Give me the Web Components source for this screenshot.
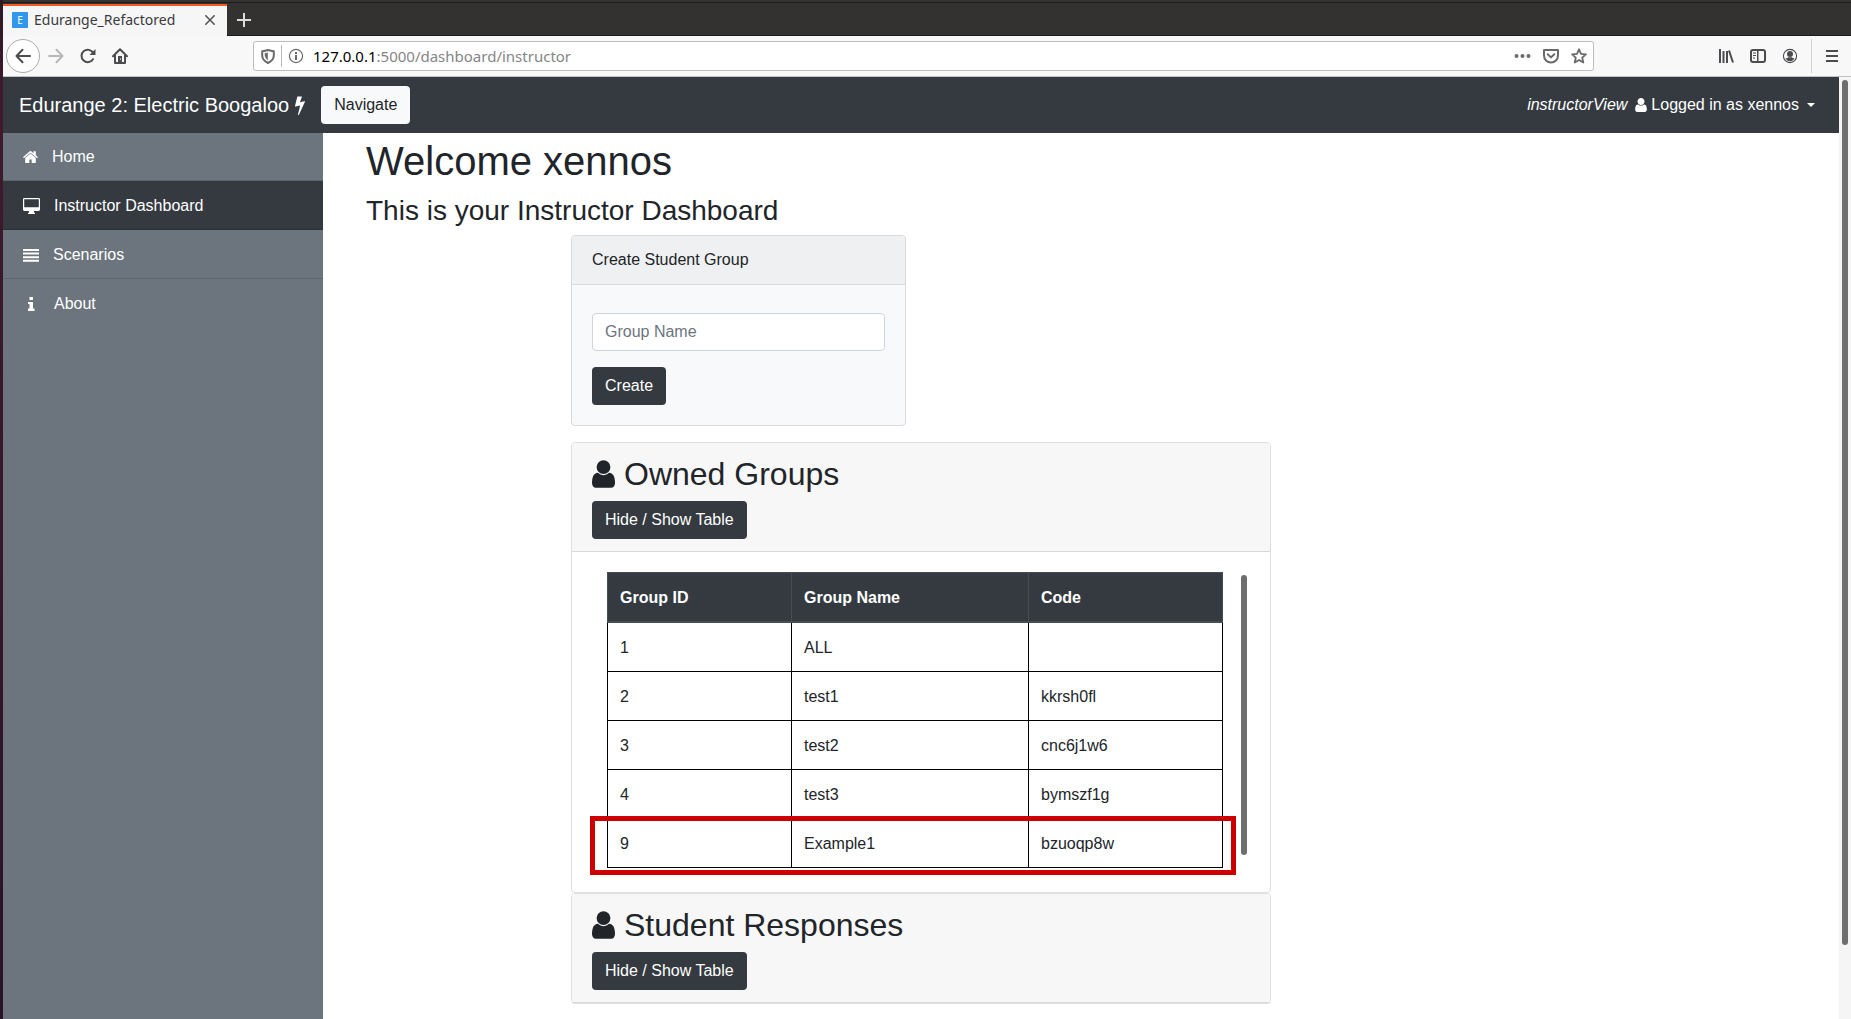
<!DOCTYPE html>
<html lang="en">
<head>
<meta charset="utf-8">
<title>Edurange_Refactored</title>
<style>
  body { margin: 0; background: #fff; color: #212529; font: 16px/24px "Liberation Sans", Arial, sans-serif; }
</style>
</head>
<body>
<desktop-frame>
  <browser-chrome slot="chrome" tab-title="Edurange_Refactored" host="127.0.0.1" path=":5000/dashboard/instructor"></browser-chrome>
  <top-nav slot="nav" brand="Edurange 2: Electric Boogaloo" view="instructorView" user="xennos"></top-nav>
  <side-nav slot="side">
    <side-link icon="home" size="15">Home</side-link>
    <side-link icon="desktop" size="17" active>Instructor Dashboard</side-link>
    <side-link icon="justify" size="16">Scenarios</side-link>
    <side-link icon="info" size="17">About</side-link>
  </side-nav>
  <instructor-dashboard></instructor-dashboard>
</desktop-frame>

<script>
const ICONS = {
  user: ['256 128 1280 1536', '<path d="M1536 1399q0 109-62.5 187t-150.5 78h-854q-88 0-150.5-78t-62.5-187q0-85 8.5-160.5t31.5-152 58.5-131 94-89 134.5-34.5q131 128 313 128t313-128q76 0 134.5 34.5t94 89 58.5 131 31.5 152 8.5 160.5zm-256-887q0 159-112.5 271.5t-271.5 112.5-271.5-112.5-112.5-271.5 112.5-271.5 271.5-112.5 271.5 112.5 112.5 271.5z"/>'],
  home: ['90 240 1612 1300', '<path d="M1472 992v480q0 26-19 45t-45 19h-384v-384h-256v384h-384q-26 0-45-19t-19-45v-480q0-1 .5-3t.5-3l575-474 575 474q1 2 1 6zm223-69l-62 74q-8 9-21 11h-3q-13 0-21-7l-692-577-692 577q-12 8-24 7-13-2-21-11l-62-74q-8-10-7-23.5t11-21.5l719-599q32-26 76-26t76 26l244 204v-195q0-14 9-23t23-9h192q14 0 23 9t9 23v408l219 182q10 8 11 21.5t-7 23.5z"/>'],
  bolt: ['448 0 896 1792', '<path d="M1333 566q18 20 7 44l-540 1157q-13 25-42 25-4 0-14-2-17-5-25.5-19t-4.5-30l197-808-406 101q-4 1-12 1-18 0-31-11-18-15-13-39l201-825q4-14 16-23t28-9h328q19 0 32 12.5t13 29.5q0 8-5 18l-171 463 396-98q8-2 12-2 19 0 34 15z"/>'],
  desktop: ['0 0 17 16', '<path fill-rule="evenodd" d="M1.400 0H15.600A1.400 1.400 0 0 1 17 1.400V11.600A1.400 1.400 0 0 1 15.600 13H11V14.500L12 15V16H5V15L6 14.500V13H1.400A1.400 1.400 0 0 1 0 11.600V1.400A1.400 1.400 0 0 1 1.400 0ZM1.200 1.200V9.200H15.800V1.200Z"/>'],
  justify: ['0 0 16 13', '<path d="M0 0h16v2H0zM0 3.600h16v2H0zM0 7.200h16v2H0zM0 10.800h16v2H0z"/>'],
  info: ['0 0 17 14', '<path d="M6.500 0H10v3H6.500zM5 5h5v6.500h1.500V14H5v-2.500h1.500V7H5z"/>'],
  back: ['0 0 16 16', '<path fill="none" stroke="currentColor" stroke-width="2" stroke-linecap="round" stroke-linejoin="round" d="M15 8H1.500M7.500 1.800L1.500 8l6 6.200"/>'],
  forward: ['0 0 16 16', '<path fill="none" stroke="currentColor" stroke-width="2" stroke-linecap="round" stroke-linejoin="round" d="M1 8h13.500M8.500 1.800L14.500 8l-6 6.200"/>'],
  reload: ['0 0 16 16', '<path fill="none" stroke="currentColor" stroke-width="2" stroke-linecap="round" d="M13 11.200A6.200 6.200 0 1 1 13.200 5"/><path d="M15.500 1v6h-6z"/>'],
  house: ['0 0 16 16', '<path fill="none" stroke="currentColor" stroke-width="2" stroke-linecap="round" stroke-linejoin="round" d="M1 8.200L8 1.200l7 7M3 7.500V15h10V7.500"/><path fill-rule="evenodd" d="M6 8h4v6H6zM8 10.500h1v1.200H8z"/>'],
  shield: ['0 0 14 15', '<path fill="none" stroke="currentColor" stroke-width="2" stroke-linejoin="round" d="M1.200 2.200Q4 2 7 1q3 1 5.800 1.200V6.500Q12.600 11.500 7 14 1.400 11.500 1.200 6.500z"/><path d="M6.800 3.500v8Q4 9.500 3.800 6.500V4.300z"/>'],
  about: ['0 0 16 16', '<circle cx="8" cy="8" r="6.600" fill="none" stroke="currentColor" stroke-width="1.200"/><path d="M7 4h2v2H7zM7 7h2v5H7z"/>'],
  dots: ['0 0 17 16', '<circle cx="2.500" cy="8" r="2"/><circle cx="8.500" cy="8" r="2"/><circle cx="14.500" cy="8" r="2"/>'],
  pocket: ['0 0 16 16', '<path fill="none" stroke="currentColor" stroke-width="2" stroke-linejoin="round" d="M1 2h14v5.500a7 7 0 0 1-14 0z"/><path fill="none" stroke="currentColor" stroke-width="2" stroke-linecap="round" stroke-linejoin="round" d="M4.700 6.200L8 9.400l3.300-3.200"/>'],
  star: ['0 0 16 16', '<path fill="none" stroke="currentColor" stroke-width="1.800" stroke-linejoin="round" d="M8 1.300l2 4.500 4.900.5-3.700 3.300 1.100 4.900L8 12l-4.300 2.500 1.100-4.900L1.100 6.300 6 5.800z"/>'],
  library: ['0 0 16 16', '<path d="M1 1h2v14H1zM4.500 3h2v12h-2zM8 3h2v12H8z"/><path fill="none" stroke="currentColor" stroke-width="2" d="M11 2.500l4 12"/>'],
  sidebar: ['0 0 16 16', '<rect x="1" y="2" width="14" height="12" rx="2" fill="none" stroke="currentColor" stroke-width="2"/><path d="M7 2h1.500v12H7zM3 4.500h3v1H3zM3 7h3v1H3zM3 9.500h2v1H3z"/>'],
  account: ['0 0 16 16', '<circle cx="8" cy="8" r="6.600" fill="none" stroke="currentColor" stroke-width="1.100"/><circle cx="8" cy="6" r="3"/><path d="M3.500 10q2 .5 2.500-.7h4q.5 1.200 2.500.7-1.500 3.300-4.500 3.300T3.500 10z"/>'],
  menu: ['0 0 14 14', '<path d="M1 1h12v2H1zM1 6h12v2H1zM1 11h12v2H1z"/>'],
  close: ['0 0 12 12', '<path fill="none" stroke="currentColor" stroke-width="1.600" stroke-linecap="round" d="M1.800 1.800l8.400 8.400M10.200 1.800l-8.400 8.400"/>'],
  plus: ['0 0 14 14', '<path d="M6 0h2v6h6v2H8v6H6V8H0V6h6z"/>']
};
const icon = (name, w, h) =>
  `<svg viewBox="${ICONS[name][0]}" width="${w}" height="${h}" fill="currentColor" aria-hidden="true">${ICONS[name][1]}</svg>`;
const BASE = `<style>
  * { box-sizing: border-box; }
  svg { display: block; flex: none; }
  button { font: inherit; color: inherit; background: none; border: 0; padding: 0; margin: 0; cursor: pointer; }
  .btn { padding: 7px 13px; border-radius: 4px; background: #343a40; color: #fff; }
  a { color: inherit; text-decoration: none; }
</style>`;
const define = (name, render) => customElements.define(name, class extends HTMLElement {
  constructor() { super(); this.attachShadow({ mode: 'open' }); }
  connectedCallback() { this.shadowRoot.innerHTML = BASE + render(this); }
});

define('desktop-frame', () => `<style>
  :host { display: flex; height: 100vh; overflow: hidden; }
  .edge { flex: 0 0 3px; background: linear-gradient(#2c1a23, #3f1a2c 8%, #35182c 50%, #2a1226); }
  .window { flex: 1; min-width: 0; display: flex; flex-direction: column; }
  .view { flex: 1; min-height: 0; display: flex; }
  .page { flex: 1; min-width: 0; display: flex; flex-direction: column; }
  .columns { flex: 1; min-height: 0; display: flex; }
  .track { flex: 0 0 12px; padding: 3px; background: #f5f5f5; }
  .thumb { height: 92.4%; border-radius: 3px; background: #6e6e6e; }
</style>
<div class="edge"></div>
<div class="window">
  <slot name="chrome"></slot>
  <div class="view">
    <div class="page"><slot name="nav"></slot><div class="columns"><slot name="side"></slot><slot></slot></div></div>
    <div class="track"><div class="thumb"></div></div>
  </div>
</div>`);

define('browser-chrome', el => `<style>
  :host { display: block; font-family: "Noto Sans", sans-serif; color: #4c4c4e; }
  .tabs { display: flex; height: 36px; padding-top: 4px; background: linear-gradient(#333 2px, #1c1b1b 2px, #1c1b1b 3px, #343131 3px, #343131 35px, #1c1b1b 35px); }
  .tab { display: flex; align-items: center; width: 224px; padding: 0 11px 2px 9px; border-top: 2px solid #f05a24; background: #f6f6f6; font-size: 14px; color: #3a3a3c; }
  .fav { width: 16px; height: 16px; margin-right: 6px; border-radius: 1px; background: #2d98ec; color: #fff; font-size: 10px; line-height: 16px; text-align: center; }
  .tab button { margin-left: auto; color: #555; }
  .add { width: 34px; display: grid; place-items: center; color: #ddd; }
  .bar { display: flex; align-items: center; height: 41px; padding: 0 12px 0 3px; background: #f8f8f8; border-bottom: 1px solid #c1c1c1; }
  .back { width: 34px; height: 34px; border: 1px solid #adadad; border-radius: 50%; background: #fff; display: grid; place-items: center; }
  .nav { display: flex; gap: 16px; margin-left: 8px; width: 205px; }
  .off { color: #b8b8b8; }
  .url { flex: 1; display: flex; align-items: center; gap: 6px; height: 30px; padding: 0 6px 0 7px; border: 1px solid #bdbdbd; border-radius: 3px; background: #fff; color: #6a6a6c; }
  .url .sep { width: 1px; height: 22px; background: #bbb; }
  .addr { flex: 1; font-size: 15px; color: #858587; padding-left: 3px; }
  .addr b { font-weight: 400; color: #000; }
  .acts { display: flex; gap: 12px; }
  .tools { display: flex; align-items: center; gap: 16px; margin-left: 124px; }
  .tools .sep { width: 1px; height: 34px; background: #d2d2d2; margin: 0 -3px; }
</style>
<div class="tabs">
  <div class="tab"><span class="fav">E</span><span>${el.getAttribute('tab-title')}</span><button aria-label="Close tab">${icon('close', 12, 12)}</button></div>
  <button class="add" aria-label="New tab">${icon('plus', 14, 14)}</button>
</div>
<div class="bar">
  <button class="back" aria-label="Back">${icon('back', 16, 16)}</button>
  <div class="nav">
    <button class="off" aria-label="Forward">${icon('forward', 16, 16)}</button>
    <button aria-label="Reload">${icon('reload', 16, 16)}</button>
    <button aria-label="Home page">${icon('house', 16, 16)}</button>
  </div>
  <div class="url">
    ${icon('shield', 14, 15)}<span class="sep"></span>${icon('about', 16, 16)}
    <span class="addr"><b>${el.getAttribute('host')}</b>${el.getAttribute('path')}</span>
    <span class="acts">${icon('dots', 17, 16)}${icon('pocket', 16, 16)}${icon('star', 16, 16)}</span>
  </div>
  <div class="tools">
    <button aria-label="Library">${icon('library', 16, 16)}</button>
    <button aria-label="Sidebars">${icon('sidebar', 16, 16)}</button>
    <button aria-label="Account">${icon('account', 16, 16)}</button>
    <span class="sep"></span>
    <button aria-label="Menu">${icon('menu', 14, 14)}</button>
  </div>
</div>`);

define('top-nav', el => `<style>
  :host { display: flex; align-items: center; height: 56px; padding: 0 24px 0 16px; background: #343a40; color: #fff; }
  .brand { display: flex; align-items: center; gap: 6px; margin-right: 16px; font-size: 20px; line-height: 30px; }
  .light { background: #f8f9fa; color: #212529; }
  .me { display: flex; align-items: center; margin-left: auto; }
  .me svg { margin: 0 4px 0 8px; }
  .caret { margin-left: 8px; border: 4px solid transparent; border-top-color: #fff; border-bottom: 0; }
</style>
<a class="brand" href="#"><span>${el.getAttribute('brand')}</span>${icon('bolt', 10, 20)}</a>
<button class="btn light">Navigate</button>
<a class="me" href="#"><i>${el.getAttribute('view')}</i>${icon('user', 12, 14)}<span>Logged in as ${el.getAttribute('user')}</span><span class="caret"></span></a>`);

define('side-nav', () => `<style>
  :host { flex: 0 0 320px; background: #6c757d; color: #fff; }
  nav { display: flex; flex-direction: column; margin-top: -1px; }
</style><nav><slot></slot></nav>`);

define('side-link', el => `<style>
  :host { display: block; border-bottom: 1px solid #5d656d; }
  :host(:last-child) { border-bottom: 0; }
  :host([active]) { background: #343a40; border-bottom-color: #2d3238; }
  a { display: flex; align-items: center; gap: 14px; padding: 13px 20px 11px; }
</style><a href="#">${icon(el.getAttribute('icon'), el.getAttribute('size'), { home: 12, desktop: 16, justify: 13, info: 14 }[el.getAttribute('icon')])}<slot></slot></a>`);

define('group-form', () => `<style>
  :host { display: block; max-width: 335px; border: 1px solid #d8dadc; border-radius: 4px; background: #f8f9fa; margin-bottom: 16px; box-sizing: border-box; }
  header { padding: 12px 20px; background: #eff0f1; border-bottom: 1px solid #d8dadc; border-radius: 3px 3px 0 0; }
  form { padding: 28px 20px 20px; }
  input { display: block; width: 100%; height: 38px; padding: 6px 12px; margin-bottom: 16px; border: 1px solid #ced4da; border-radius: 4px; background: #fff; font: inherit; color: #495057; }
  input::placeholder { color: #6c757d; opacity: 1; }
  .btn { display: block; }
</style>
<header><label for="name">Create Student Group</label></header>
<form><input id="name" type="text" placeholder="Group Name"><button class="btn" type="button">Create</button></form>`);

define('panel-card', el => `<style>
  :host { display: block; max-width: 700px; border: 1px solid #dfdfdf; border-radius: 4px; background: #fff; box-sizing: border-box; }
  header { padding: 12px 20px; background: #f7f7f7; border-bottom: 1px solid #d9d9d9; border-radius: 3px 3px 0 0; }
  h2 { display: flex; align-items: center; gap: 9px; margin: 0 0 8px; font-size: 32px; line-height: 38px; font-weight: 400; }
  .btn { display: block; }
</style>
<header><h2>${icon('user', 23, 28)}<span>${el.getAttribute('heading')}</span></h2><button class="btn">Hide / Show Table</button></header>
<slot></slot>`);

const GROUPS = [['1', 'ALL', ''], ['2', 'test1', 'kkrsh0fl'], ['3', 'test2', 'cnc6j1w6'], ['4', 'test3', 'bymszf1g'], ['9', 'Example1', 'bzuoqp8w']];
define('group-table', () => `<style>
  :host { display: flex; height: 300px; margin: 20px; padding-left: 15px; }
  .wrap { flex: 1; position: relative; align-self: flex-start; }
  table { width: 100%; table-layout: fixed; border-collapse: collapse; }
  th, td { padding: 13px 12px 11px; text-align: left; border: 1px solid #000; }
  th { background: #343a40; color: #fff; border-color: #454d55; border-bottom-width: 2px; }
  th:first-child { width: 184px; }
  th:last-child { width: 194px; }
  .mark { position: absolute; left: -17px; right: -13px; bottom: -7px; height: 59px; border: 5px solid #c00; pointer-events: none; }
  .track { flex: 0 0 12px; margin: 0 0 0 15px; padding: 3px; }
  .thumb { height: 280px; border-radius: 3px; background: #6e6e6e; }
</style>
<div class="wrap">
  <table><thead><tr><th>Group ID</th><th>Group Name</th><th>Code</th></tr></thead>
  <tbody>${GROUPS.map(r => `<tr>${r.map(c => `<td>${c}</td>`).join('')}</tr>`).join('')}</tbody></table>
  <div class="mark"></div>
</div>
<div class="track"><div class="thumb"></div></div>`);

define('instructor-dashboard', () => `<style>
  :host { flex: 1; min-width: 0; padding: 4px 43px 0; background: #fff; }
  h1, h3 { margin: 0; font-weight: 400; }
  h1 { font-size: 40px; line-height: 48px; margin-bottom: 8px; }
  h3 { font-size: 28px; line-height: 36px; margin-bottom: 6px; }
  .cards { margin-left: 205px; }
</style>
<h1>Welcome xennos</h1>
<h3>This is your Instructor Dashboard</h3>
<div class="cards">
  <group-form></group-form>
  <panel-card heading="Owned Groups"><group-table></group-table></panel-card>
  <panel-card heading="Student Responses"></panel-card>
</div>`);
</script>
</body>
</html>
